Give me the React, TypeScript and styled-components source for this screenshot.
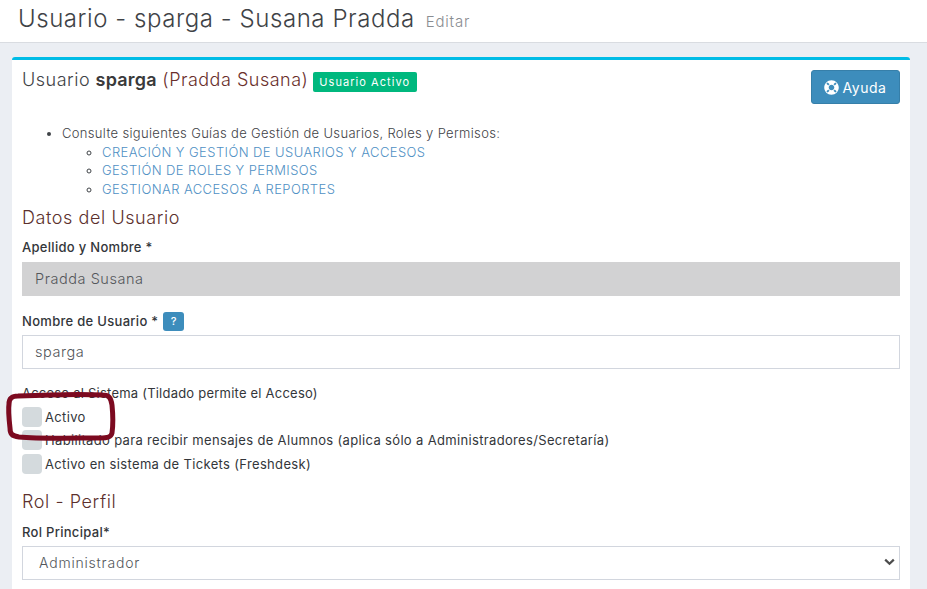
import React from "react";
import styled, { createGlobalStyle } from "styled-components";
import { FaLifeRing } from "react-icons/fa";

const Global = createGlobalStyle`
  html, body { margin: 0; padding: 0; height: 589px; overflow: hidden; background: #ebeef3; }
  body { font-family: "Inter", "Open Sans", sans-serif; color: #3b3f45; }
  * { box-sizing: border-box; }
`;

const Page = styled.div`
  position: relative;
  width: 927px;
  height: 589px;
  overflow: hidden;
`;

const Header = styled.header`
  height: 43px;
  background: #fff;
  border-bottom: 1px solid #d9dce1;
  padding: 4px 0 0 18px;
  display: flex;
  align-items: baseline;
  gap: 11px;
`;

const PageTitle = styled.h1`
  margin: 0;
  font-size: 24px;
  line-height: 30px;
  font-weight: 300;
  letter-spacing: 0.56px;
  color: #3f4347;
`;

const Small = styled.small`
  font-size: 15px;
  font-weight: 300;
  letter-spacing: 0.8px;
  color: #8a8d91;
`;

const Card = styled.section`
  margin: 14px 17px 0 12px;
  height: 560px;
  background: #fff;
  border-top: 3px solid #00bce6;
  border-radius: 3px 3px 0 0;
  padding: 9px 10px 0;
`;

const CardHead = styled.div`
  display: flex;
  justify-content: space-between;
  align-items: flex-start;
  height: 43px;
`;

const CardTitle = styled.div`
  display: flex;
  align-items: flex-start;
  gap: 5px;
  height: 21px;
`;

const TitleText = styled.h2`
  margin: 0;
  font-size: 18px;
  line-height: 21px;
  font-weight: 300;
  letter-spacing: 0.5px;
  color: #6a2f2c;
  b { font-weight: 600; color: #3a3a3a; letter-spacing: 0.2px; }
  span { color: #3f4347; }
`;

const Badge = styled.span`
  background: #00b87e;
  color: #fff;
  font-size: 11px;
  line-height: 20px;
  height: 20px;
  margin-top: 3px;
  padding: 0 7px 0 6px;
  border-radius: 2px;
  letter-spacing: 1.05px;
  font-weight: 400;
`;

const HelpButton = styled.button`
  width: 89px;
  height: 34px;
  margin-top: 1px;
  background: #3d8dbc;
  border: 1px solid #367fa9;
  border-radius: 3px;
  color: #fff;
  font: 400 14px "Inter", sans-serif;
  letter-spacing: 0.55px;
  display: flex;
  align-items: center;
  justify-content: center;
  gap: 3px;
  padding: 0;
`;

const Guides = styled.ul`
  margin: 12px 0 0;
  padding: 0 0 0 40px;
  font-size: 13px;
  font-weight: 300;
  letter-spacing: 0.33px;
  line-height: 18.6px;
  color: #3f4347;
  ul { margin: 0; padding-left: 40px; list-style: circle; }
  a { color: #4f90c4; text-decoration: none; letter-spacing: 0.42px; }
`;

const SectionTitle = styled.h3<{ $top: number }>`
  margin: ${(p) => p.$top}px 0 0;
  font-size: 18px;
  line-height: 22px;
  font-weight: 300;
  letter-spacing: 0.58px;
  color: #5c302d;
`;

const Label = styled.label<{ $top: number; $plain?: boolean }>`
  display: flex;
  align-items: center;
  gap: 5px;
  height: 20px;
  margin-top: ${(p) => p.$top}px;
  font-size: 13px;
  font-weight: ${(p) => (p.$plain ? 400 : 500)};
  letter-spacing: ${(p) => (p.$plain ? 0.22 : 0.3)}px;
  color: #33363a;
`;

const Hint = styled.span`
  width: 21px;
  height: 19px;
  background: #3d8dbc;
  border-radius: 3px;
  color: #fff;
  font-size: 11px;
  font-weight: 500;
  text-align: center;
  line-height: 19px;
`;

const TextInput = styled.div<{ $disabled?: boolean }>`
  height: 34px;
  margin-top: ${(p) => (p.$disabled ? 5 : 4)}px;
  padding: 0 12px 2px;
  display: flex;
  align-items: center;
  font-size: 14.5px;
  font-weight: 300;
  letter-spacing: 0.55px;
  color: #54575b;
  background: ${(p) => (p.$disabled ? "#d2d2d3" : "#fff")};
  border: 1px solid ${(p) => (p.$disabled ? "#d2d2d3" : "#d2d6de")};
`;

const CheckGroup = styled.div`
  display: flex;
  flex-direction: column;
  gap: 2.5px;
  margin-top: 3px;
`;

const CheckRow = styled.div`
  display: flex;
  align-items: center;
  gap: 3px;
  height: 21px;
  font-size: 13px;
  font-weight: 400;
  letter-spacing: 0.34px;
  color: #33363a;
`;

const CheckBox = styled.span`
  width: 20px;
  height: 20px;
  border-radius: 4px;
  background: #d4dadd;
  flex: none;
`;

const SelectBox = styled.div`
  height: 34px;
  margin-top: 4px;
  padding: 0 4px 2px 16px;
  display: flex;
  align-items: center;
  justify-content: space-between;
  font-size: 14px;
  font-weight: 300;
  letter-spacing: 0.8px;
  color: #54575b;
  background: #fff;
  border: 1px solid #d2d6de;
`;

const Annotation = styled.svg`
  position: absolute;
  left: 5px;
  top: 390px;
  width: 112px;
  height: 52px;
  pointer-events: none;
`;

const Chevron = () => (
  <svg width="11" height="8" viewBox="0 0 11 8" aria-hidden="true">
    <path d="M1.2 1.6l4.3 4.2 4.3-4.2" fill="none" stroke="#4c4c4c" strokeWidth="2.2" />
  </svg>
);

export default function App() {
  return (
    <Page>
      <Global />
      <Header>
        <PageTitle>Usuario - sparga - Susana Pradda</PageTitle>
        <Small>Editar</Small>
      </Header>
      <Card>
        <CardHead>
          <CardTitle>
            <TitleText>
              <span>Usuario</span> <b>sparga</b> (Pradda Susana)
            </TitleText>
            <Badge>Usuario Activo</Badge>
          </CardTitle>
          <HelpButton>
            <FaLifeRing size={15} />
            Ayuda
          </HelpButton>
        </CardHead>
        <Guides>
          <li>
            Consulte siguientes Guías de Gestión de Usuarios, Roles y Permisos:
            <ul>
              <li><a href="#a">CREACIÓN Y GESTIÓN DE USUARIOS Y ACCESOS</a></li>
              <li><a href="#b">GESTIÓN DE ROLES Y PERMISOS</a></li>
              <li><a href="#c">GESTIONAR ACCESOS A REPORTES</a></li>
            </ul>
          </li>
        </Guides>
        <SectionTitle $top={9}>Datos del Usuario</SectionTitle>
        <Label $top={8}>Apellido y Nombre *</Label>
        <TextInput $disabled>Pradda Susana</TextInput>
        <Label $top={15}>
          Nombre de Usuario * <Hint>?</Hint>
        </Label>
        <TextInput>sparga</TextInput>
        <Label $top={14} $plain>Acceso al Sistema (Tildado permite el Acceso)</Label>
        <CheckGroup>
          <CheckRow><CheckBox />Activo</CheckRow>
          <CheckRow><CheckBox />Habilitado para recibir mensajes de Alumnos (aplica sólo a Administradores/Secretaría)</CheckRow>
          <CheckRow><CheckBox />Activo en sistema de Tickets (Freshdesk)</CheckRow>
        </CheckGroup>
        <SectionTitle $top={17}>Rol - Perfil</SectionTitle>
        <Label $top={9}>Rol Principal*</Label>
        <SelectBox>
          Administrador
          <Chevron />
        </SelectBox>
      </Card>
      <Annotation viewBox="0 0 112 52" aria-hidden="true">
        <path
          d="M13 6 C35 5 80 4 98 5 C104 5 106 8 107 15 C108 25 108 36 107 43 C106 47 103 48 95 48 C70 48 35 49 14 47 C7 46 5 44 5 38 C4 29 3 20 4 14 C4 8 7 6 13 6 Z"
          fill="none"
          stroke="#7c0a20"
          strokeWidth="5"
        />
      </Annotation>
    </Page>
  );
}
